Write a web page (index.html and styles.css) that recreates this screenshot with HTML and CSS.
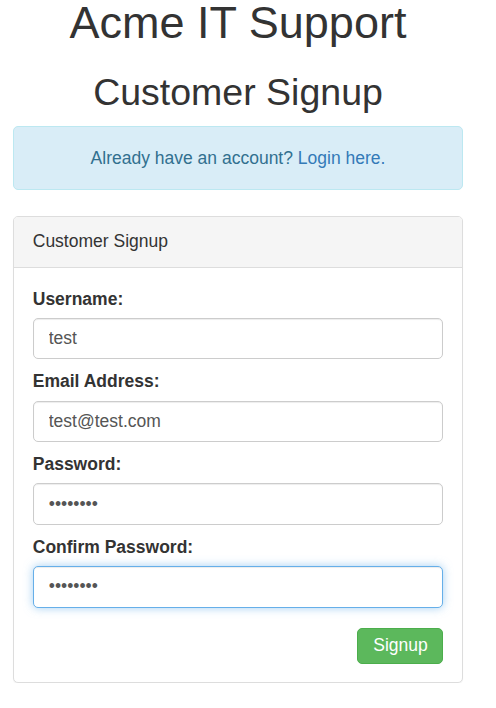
FILE: index.html
```html
<!DOCTYPE html>
<html lang="en">
<head>
<meta charset="utf-8">
<title>Customer Signup - Acme IT Support</title>
<link rel="stylesheet" href="styles.css">
</head>
<body>
<div class="container">
  <h1 class="site-title">Acme IT Support</h1>
  <h2 class="page-title">Customer Signup</h2>
  <div class="alert-info">Already have an account? <a href="#" class="link">Login here.</a></div>
  <div class="panel">
    <div class="panel-heading">Customer Signup</div>
    <form class="panel-body">
      <div class="form-group">
        <label class="field-label" for="username">Username:</label>
        <input class="form-control" id="username" type="text" value="test">
      </div>
      <div class="form-group">
        <label class="field-label" for="email">Email Address:</label>
        <input class="form-control" id="email" type="text" value="test@test.com">
      </div>
      <div class="form-group">
        <label class="field-label" for="password">Password:</label>
        <input class="form-control" id="password" type="password" value="12345678">
      </div>
      <div class="form-group last">
        <label class="field-label" for="confirm">Confirm Password:</label>
        <input class="form-control is-focus" id="confirm" type="password" value="12345678">
      </div>
      <div class="actions">
        <button type="button" class="btn-success">Signup</button>
      </div>
    </form>
  </div>
</div>
</body>
</html>
```
FILE: styles.css
```css
* {
  box-sizing: border-box;
}

html, body {
  margin: 0;
  padding: 0;
  background: #fff;
}

body {
  font-family: "Liberation Sans", Arial, Helvetica, sans-serif;
  font-size: 17.5px;
  line-height: 25px;
  color: #333;
}

.container {
  width: 463px;
  padding-left: 13px;
}

.site-title {
  margin: 0;
  font-size: 45px;
  line-height: 45px;
  font-weight: normal;
  text-align: center;
  color: #333;
}

.page-title {
  margin: 26.5px 0 13px;
  font-size: 37.5px;
  line-height: 41.25px;
  font-weight: normal;
  text-align: center;
  color: #333;
}

.alert-info {
  padding: 18.75px;
  border: 1px solid #bce8f1;
  border-radius: 5px;
  background: #d9edf7;
  color: #31708f;
  text-align: center;
  margin-bottom: 25.5px;
}

.link {
  color: #337ab7;
  text-decoration: none;
}

.panel {
  border: 1px solid #ddd;
  border-radius: 5px;
  background: #fff;
  box-shadow: 0 1px 1px rgba(0, 0, 0, 0.05);
}

.panel-heading {
  padding: 12.5px 18.75px;
  background: #f5f5f5;
  border-bottom: 1px solid #ddd;
  border-radius: 4px 4px 0 0;
  color: #333;
}

.panel-body {
  display: flex;
  flex-direction: column;
  padding: 18.75px;
  margin: 0;
}

.form-group {
  display: flex;
  flex-direction: column;
  margin-bottom: 10px;
}

.form-group.last {
  margin-bottom: 20px;
}

.field-label {
  font-weight: bold;
  line-height: 25px;
  margin-bottom: 6.25px;
}

.form-control {
  display: block;
  width: 100%;
  height: 41.5px;
  padding: 7.5px 15px;
  font-family: "Liberation Sans", Arial, Helvetica, sans-serif;
  font-size: 17.5px;
  line-height: 25px;
  color: #555;
  background: #fff;
  border: 1px solid #ccc;
  border-radius: 5px;
  box-shadow: inset 0 1px 1px rgba(0, 0, 0, 0.075);
  outline: none;
  margin: 0;
}

.form-control.is-focus {
  border-color: #66afe9;
  box-shadow: inset 0 1px 1px rgba(0, 0, 0, 0.075), 0 0 10px rgba(102, 175, 233, 0.6);
}

.actions {
  display: flex;
  justify-content: flex-end;
}

.btn-success {
  width: 86px;
  height: 36px;
  padding: 0 15px;
  font-family: "Liberation Sans", Arial, Helvetica, sans-serif;
  font-size: 17.5px;
  line-height: 25px;
  color: #fff;
  background: #5cb85c;
  border: 1px solid #4cae4c;
  border-radius: 5px;
  cursor: pointer;
}
```
